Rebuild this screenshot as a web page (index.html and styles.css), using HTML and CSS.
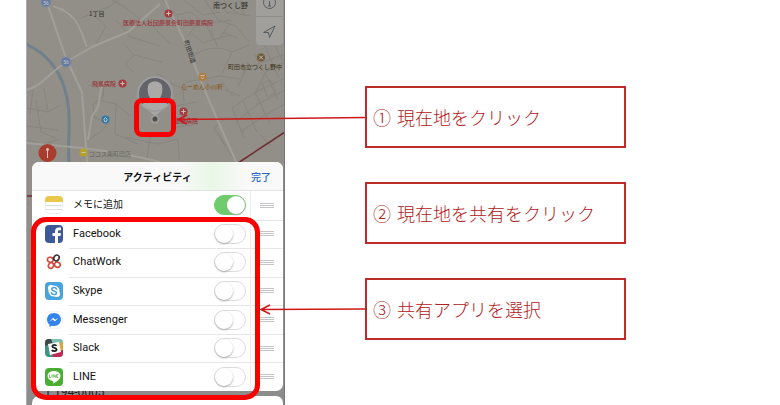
FILE: index.html
```
<!DOCTYPE html>
<html lang="ja">

<head>
  <meta charset="UTF-8">
  <meta name="viewport" content="width=device-width, initial-scale=1">
  <title>現在地の共有</title>
  <link rel="stylesheet" href="styles.css">
</head>

<body>
  <div class="guide">
    <div class="phone">
      <svg class="map" viewBox="26 0 259 405" preserveAspectRatio="xMinYMin slice">
        <rect x="26" width="259" height="405" fill="#918f88"/>
        <!-- 川 -->
        <path d="M26 44 C48 54 62 72 67 98 C72 122 67 140 69 162" fill="none" stroke="#72808b" stroke-width="3"/>
        <!-- 細い道 -->
        <g class="lane">
          <path d="M53 4 C66 13 77 20 80 32 L88 48 M112 0 L123 6 L150 26 M92 13 L106 26 L96 44 M116 20 L130 36 M81 18 L108 7 L119 0"/>
          <path d="M125 45 L134 55 L162 62 M134 55 L125 64 L134 73 M148 20 L157 31 L171 44 M128 36 L160 46 M165 10 L176 24 L192 22"/>
          <path d="M26 108 L48 112 L60 105 M36 100 L41 132 L56 138 M26 126 L58 130 M44 88 L48 112 M26 140 L43 144 L60 139 M33 90 L30 114"/>
          <path d="M88 86 L104 82 L103 97 L93 104 L94 117 L108 123 L101 132 L88 140 M98 100 L116 104 L130 116 M116 104 L115 134 L138 144"/>
          <path d="M125 137 L158 144 L178 139 L179 160 M150 137 L147 158 M170 128 L198 124 M176 106 L196 102 M183 88 L184 102"/>
          <path d="M162 0 L177 15 L190 12 L206 24 L213 40 M184 0 L203 15 L220 12 M205 0 L218 20 L236 26 L249 42 M192 34 L203 43 L229 35 M198 22 L188 36"/>
          <path d="M218 0 L226 12 L250 16 M224 0 L236 13 M240 0 L244 15 M202 24 L231 20 M222 32 L237 38 M211 30 L217 46 M229 24 L219 40"/>
          <path d="M194 56 C204 46 224 47 232 52 L222 74 M232 52 L249 45 M186 82 L220 76 L240 79 M238 86 L247 68 L285 54 M254 96 L266 72 L285 62"/>
          <path d="M232 108 L252 94 L285 78 M236 122 L258 104 L285 90 M241 132 L263 116 L285 104 M232 108 L244 138 M243 101 L257 132 M256 94 L270 124"/>
          <path d="M226 118 L214 128 L226 146 M214 128 L234 160 M260 134 L270 146 M269 82 L278 100 M262 84 L270 80 L276 92 L268 97 Z M225 90 L240 96 M222 82 L233 96"/>
          <path d="M248 62 L242 76 M254 54 L270 82 M265 46 L279 78 M275 46 L283 61 M170 83 L188 91 M156 73 L166 79"/>
          <path d="M26 200 L30 206 M26 228 L32 232 M26 262 L32 260"/>
        </g>
        <!-- 大きい道 -->
        <g class="road">
          <path d="M46 0 L66 58 L82 92 L87 162"/>
          <path d="M26 90 C42 86 48 74 66 62 L94 46 L128 32 L160 4" />
          <path d="M53 6 C78 14 80 30 87 47"/>
          <path d="M165 0 L186 44 L208 98 L236 162"/>
          <path d="M26 143 C60 146 110 149 160 162"/>
          <path d="M104 82 C96 96 104 102 92 116 L88 140"/>
        </g>
        <path d="M285 132 L235 165 M26 196 H34" fill="none" stroke="#702c30" stroke-width="1.500"/>
        <!-- 道路番号 -->
        <g class="route">
          <circle cx="46" cy="2" r="5"/>
          <circle cx="66" cy="62" r="5"/>
          <text x="66" y="64">56</text>
          <text x="46" y="5">56</text>
        </g>
        <!-- 施設 -->
        <g class="pins">
          <circle cx="168.500" cy="13.500" r="4" fill="#a53c40"/>
          <path d="M168.500 11.300v4.400M166.300 13.500h4.400"/>
          <circle cx="122.500" cy="83.500" r="4" fill="#a53c40"/>
          <path d="M122.500 81.300v4.400M120.300 83.500h4.400"/>
          <circle cx="183.500" cy="111.500" r="4" fill="#a53c40"/>
          <path d="M183.500 109.300v4.400M181.300 111.500h4.400"/>
          <circle cx="202.500" cy="77" r="4" fill="#b07c3e"/>
          <path d="M200.500 75.500h4M200.800 77.500q1.700 2 3.400 0"/>
          <circle cx="261" cy="57.500" r="4" fill="#6f5a3b"/>
          <path d="M259 55.500l4 4M263 55.500l-4 4"/>
          <circle cx="105.500" cy="119.500" r="4" fill="#2e78a5"/>
          <path d="M103.500 119.500l2-2 2 2M104.300 119.500v2h2.400v-2"/>
          <circle cx="83.500" cy="152.500" r="4" fill="#b5a12a"/>
          <path d="M81.500 152.500h4" stroke="#554b19"/>
        </g>
        <g class="place">
          <text x="89" y="16" class="small">1丁目</text>
          <text x="213" y="8">南つくし野</text>
          <text x="123" y="25" class="hospital">医療法人社団慶泉会町田慶泉病院</text>
          <text x="92" y="86" class="hospital">飛鳥病院</text>
          <text x="174" y="123" class="hospital">高橋病院</text>
          <text x="181" y="89" class="food">らーめん小川軒</text>
          <text x="228" y="69" class="school">町田市立つくし野中</text>
          <text x="89" y="156" class="shop">ココス南町田店</text>
          <text transform="translate(184 41) rotate(72)" class="small">町田街道</text>
        </g>
        <circle cx="47.500" cy="153" r="9" fill="#a93b2f"/>
        <path d="M47.500 158v-8" stroke="#d5c8c2" stroke-width="1"/>
        <circle cx="47.500" cy="149.500" r="1.500" fill="#d5c8c2"/>
        <!-- 地図のボタン -->
        <rect x="256" y="-12" width="27" height="57" rx="4" fill="#a09f9b"/>
        <path d="M256 16.500h27" stroke="#8e8d89"/>
        <g fill="none" stroke="#555a60">
          <circle cx="269.500" cy="2.500" r="6"/>
          <path d="M269.500 1v5M268 6h3M263.500 32.500l11.500-6.500-5.500 11.500-1-5z"/>
        </g>
        <!-- 現在地 -->
        <path d="M149 111l6 5 6-5z" fill="#aaa9a7"/>
        <circle cx="155" cy="94" r="17" fill="#62646a" stroke="#9c9c9d" stroke-width="2"/>
        <path d="M142 105c3-4 6-5 8-7-2-3-3-8-2-12 1-6 13-6 14 0 1 4 0 9-2 12 2 2 5 3 8 7-7 7-19 7-26 0z" fill="#aaa9a8"/>
        <circle cx="155" cy="119" r="4.500" fill="#9c9b98"/>
        <circle cx="155" cy="119" r="2.500" fill="#4e4e4e"/>
        <path d="M26.500 0v405" stroke="#a5afb5"/>
        <path d="M284.500 0v405" stroke="#777"/>
        <rect x="28" y="385" width="256" height="20" fill="#8c8c8c"/>
        <text x="42" y="396" class="postal">〒194-0005</text>
      </svg>

      <section class="sheet">
        <header class="sheet-head">
          <h1>アクティビティ</h1>
          <button type="button" class="done">完了</button>
        </header>
        <ul class="apps">
          <li>
            <svg class="icon" viewBox="0 0 18 18">
              <rect x=".5" y=".5" width="17" height="17" rx="4" fill="#fff" stroke="#eee"/>
              <path d="M0 6V4q0-4 4-4h10q4 0 4 4v2z" fill="#e9c64c"/>
              <path d="M1 9.500h16M1 13.500h16" stroke="#dedede"/>
            </svg>
            <label for="memo">メモに追加</label>
            <input type="checkbox" id="memo" checked>
            <span class="grip"></span>
          </li>
          <li>
            <svg class="icon" viewBox="0 0 18 18">
              <rect width="18" height="18" rx="4" fill="#3c5a99"/>
              <path d="M10 18v-7H7.500V8H10V6.300C10 3.800 11.500 2.500 13.700 2.500H16v2.800h-1.600c-1 0-1.400.5-1.400 1.300V8h3l-.5 3H13v7z" fill="#fff"/>
            </svg>
            <label for="facebook">Facebook</label>
            <input type="checkbox" id="facebook">
            <span class="grip"></span>
          </li>
          <li>
            <svg class="icon" viewBox="0 0 18 18" fill="none" stroke-width="1.600">
              <ellipse cx="5.300" cy="6.700" rx="2.900" ry="2.400" transform="rotate(15 5.300 6.700)" stroke="#d34b3d"/>
              <ellipse cx="6" cy="12.500" rx="2.500" ry="2.900" transform="rotate(30 6 12.500)" stroke="#d34b3d"/>
              <ellipse cx="12.400" cy="11.700" rx="2.900" ry="2.500" transform="rotate(25 12.400 11.700)" stroke="#d34b3d"/>
              <ellipse cx="11.500" cy="5" rx="2.500" ry="3" transform="rotate(30 11.500 5)" stroke="#382c2c"/>
            </svg>
            <label for="chatwork">ChatWork</label>
            <input type="checkbox" id="chatwork">
            <span class="grip"></span>
          </li>
          <li>
            <svg class="icon" viewBox="0 0 18 18">
              <rect width="18" height="18" rx="4" fill="#48a5db"/>
              <circle cx="9" cy="9" r="5.500" fill="#fff"/>
              <circle cx="6" cy="6" r="3" fill="#fff"/>
              <circle cx="12" cy="12" r="3" fill="#fff"/>
              <path d="M11.500 7C10.800 5 6.800 5 6.800 7.200c0 2.300 4.700 1.300 4.700 3.700 0 2.100-4.400 2.200-5-.2" fill="none" stroke="#48a5db" stroke-width="1.600" stroke-linecap="round"/>
            </svg>
            <label for="skype">Skype</label>
            <input type="checkbox" id="skype">
            <span class="grip"></span>
          </li>
          <li>
            <svg class="icon" viewBox="0 0 18 18">
              <rect x=".5" y=".5" width="17" height="17" rx="4" fill="#fff" stroke="#f2f2f2"/>
              <path d="M9 2c-4 0-7 2.800-7 6.500 0 2.100 1 4 2.500 5.100V16l2.300-1.300c.7.200 1.400.3 2.200.3 4 0 7-2.800 7-6.500S13 2 9 2z" fill="#3484ee"/>
              <path d="M4.500 10.500l3.700-3.800 2 2 3.300-2-3.700 3.900-2-2z" fill="#fff"/>
            </svg>
            <label for="messenger">Messenger</label>
            <input type="checkbox" id="messenger">
            <span class="grip"></span>
          </li>
          <li>
            <svg class="icon" viewBox="0 0 18 18">
              <rect width="18" height="18" rx="4" fill="#3e9682"/>
              <path d="M0 4q0-4 4-4h2l2 4-8 3z" fill="#3b4a45"/>
              <path d="M6 0h8q4 0 4 4v1L8 5z" fill="#7fbeb0"/>
              <path d="M14 4l4-1v9l-3 1z" fill="#d9a53c"/>
              <path d="M18 11v3q0 4-4 4H8l-1-4z" fill="#be2853"/>
              <path d="M3 5l11-2 2 10-11 3z" fill="#fff"/>
              <path d="M11.500 7C10.800 5.300 7.300 5.500 7.300 7.300c0 2 4.300 1.200 4.300 3.300 0 2-4 2-4.700.2" fill="none" stroke="#222" stroke-width="1.800"/>
            </svg>
            <label for="slack">Slack</label>
            <input type="checkbox" id="slack">
            <span class="grip"></span>
          </li>
          <li>
            <svg class="icon" viewBox="0 0 18 18">
              <rect width="18" height="18" rx="4" fill="#4aae34"/>
              <path d="M9 3C5.300 3 2.500 5.200 2.500 8c0 2.500 2.200 4.500 5.200 4.900.8.200.6 1 .5 2.600 2.700-1.300 7.300-4.300 7.300-7.500C15.500 5.200 12.700 3 9 3z" fill="#fff"/>
              <path d="M4.500 6.500v3H6M7 6.500v3M8.300 9.500v-3l2 3v-3M13.300 6.500h-1.700v3h1.700M11.600 8h1.500" fill="none" stroke="#4aae34" stroke-width=".7"/>
            </svg>
            <label for="line">LINE</label>
            <input type="checkbox" id="line">
            <span class="grip"></span>
          </li>
        </ul>
      </section>
      <div class="next-sheet"></div>

      <div class="mark mark-pin"></div>
      <div class="mark mark-apps"></div>
    </div>

    <ol class="notes">
      <li><span>①</span><span>現在地をクリック</span></li>
      <li><span>②</span><span>現在地を共有をクリック</span></li>
      <li><span>③</span><span>共有アプリを選択</span></li>
    </ol>

    <svg class="arrows" width="366" height="405" viewBox="0 0 366 405">
      <path d="M366 117.500L178 119.500M187 115l-9 4.500 9 4.500"/>
      <path d="M366 309L261 309.500M270 305l-9 4.500 9 4.500"/>
    </svg>
  </div>
</body>

</html>
```
FILE: styles.css
```
body {
  margin: 0;
  background-color: #fff;
  font-family: Roboto, "Noto Sans CJK JP", sans-serif;
}

.guide {
  position: relative;
  display: flex;
  gap: 80px;
  min-height: 100vh;
  padding-left: 26px;
}

/* スマホ画面 */
.phone {
  position: relative;
  flex: 0 0 259px;
  box-sizing: border-box;
  padding: 162px 2px 0 6px;
  display: flex;
  flex-direction: column;
  gap: 5px;
  overflow: hidden;
}

.map {
  position: absolute;
  top: 0;
  left: 0;
  width: 100%;
  height: 100%;
}

.lane {
  fill: none;
  stroke: #817f79;
  stroke-width: 1;
  opacity: 0.6;
}

.road {
  fill: none;
  stroke: #a19f9a;
  stroke-width: 2;
}

.route circle {
  fill: #687b9d;
  stroke: #7f8ba1;
}

.route text {
  font-size: 5px;
  fill: #c4cad3;
  text-anchor: middle;
}

.pins path {
  fill: none;
  stroke: #c9c2bc;
}

.place text {
  font-family: "Noto Sans CJK JP", sans-serif;
  font-size: 7px;
  font-weight: 500;
  fill: #3c3a37;
}

.place .small,
.place .hospital,
.place .food,
.place .school,
.place .shop {
  font-size: 6px;
}

.place .hospital {
  fill: #9c3238;
}

.place .food {
  fill: #8a5c26;
}

.place .school {
  fill: #4a3b27;
}

.place .shop {
  fill: #6d6b66;
}

.postal {
  font-size: 12px;
  fill: #222;
}

.sheet {
  position: relative;
  border-radius: 7px;
  background-color: #fff;
  overflow: hidden;
}

.sheet-head {
  position: relative;
  display: flex;
  align-items: center;
  justify-content: center;
  height: 29px;
  border-bottom: 1px solid #e3e3e3;
  background: linear-gradient(90deg, #f9f9f9 58%, #e9f7e6 72%, #f9f9f9 86%);
  box-sizing: border-box;
}

.sheet-head h1 {
  margin: 0;
  font-size: 10px;
  font-weight: bold;
  color: #111;
}

.done {
  position: absolute;
  right: 12px;
  padding: 0;
  border: none;
  background-color: transparent;
  font-family: inherit;
  font-size: 10px;
  font-weight: 500;
  color: #2765c9;
}

.apps {
  display: grid;
  grid-template-rows: repeat(7, 1fr);
  height: 200px;
  margin: 0;
  padding: 0;
  list-style: none;
}

.apps li {
  display: grid;
  grid-template-columns: 18px 1fr 46px 14px;
  align-items: center;
  padding: 0 9px 0 13px;
  background: linear-gradient(#ececec, #ececec) 218px 0 / 1px 100% no-repeat;
}

.apps li + li {
  background: linear-gradient(#ececec, #ececec) 218px 0 / 1px 100% no-repeat,
    linear-gradient(#e6e6e6, #e6e6e6) 37px 0 / 100% 1px no-repeat;
}

.icon {
  width: 18px;
  height: 18px;
}

.apps label {
  padding-left: 10px;
  font-size: 11px;
  line-height: 16px;
  color: #111;
}

.apps li:first-child label {
  font-size: 10px;
}

.apps input {
  appearance: none;
  position: relative;
  box-sizing: border-box;
  width: 32px;
  height: 20px;
  margin: 0;
  border: 1px solid #dfdadd;
  border-radius: 10px;
  background-color: #fff;
}

.apps input::before {
  content: "";
  position: absolute;
  top: 0;
  left: 0;
  width: 18px;
  height: 18px;
  border-radius: 50%;
  background-color: #fff;
  box-shadow: 0 1px 2px #aaa;
}

.apps input:checked {
  border-color: #6fcb6c;
  background-color: #6fcb6c;
}

.apps input:checked::before {
  left: 12px;
}

.grip {
  width: 14px;
  height: 1px;
  background-color: #c4c4c8;
  box-shadow: 0 -2px #c4c4c8, 0 2px #c4c4c8;
}

.next-sheet {
  position: relative;
  flex: 1;
  border-radius: 7px 7px 0 0;
  background-color: #fff;
}

/* 赤い枠 */
.mark {
  position: absolute;
  box-sizing: border-box;
  border: 5px solid #f80000;
}

.mark-pin {
  top: 98px;
  left: 108px;
  width: 42px;
  height: 39px;
  border-radius: 8px;
}

.mark-apps {
  top: 217px;
  left: 5px;
  width: 229px;
  height: 183px;
  border-radius: 15px;
}

/* 説明 */
.notes {
  flex: 0 1 261px;
  display: flex;
  flex-direction: column;
  gap: 34px;
  margin: 0;
  padding: 86px 0 0;
  list-style: none;
}

.notes li {
  display: flex;
  align-items: center;
  gap: 6px;
  box-sizing: border-box;
  height: 62px;
  padding-left: 6px;
  border: 2px solid #bd2a2a;
  font-family: "Noto Sans CJK JP", sans-serif;
  font-size: 18px;
  font-weight: 300;
  color: #b02020;
}

.arrows {
  position: absolute;
  top: 0;
  left: 0;
  fill: none;
  stroke: #cf1818;
  stroke-width: 1.5;
}
```
